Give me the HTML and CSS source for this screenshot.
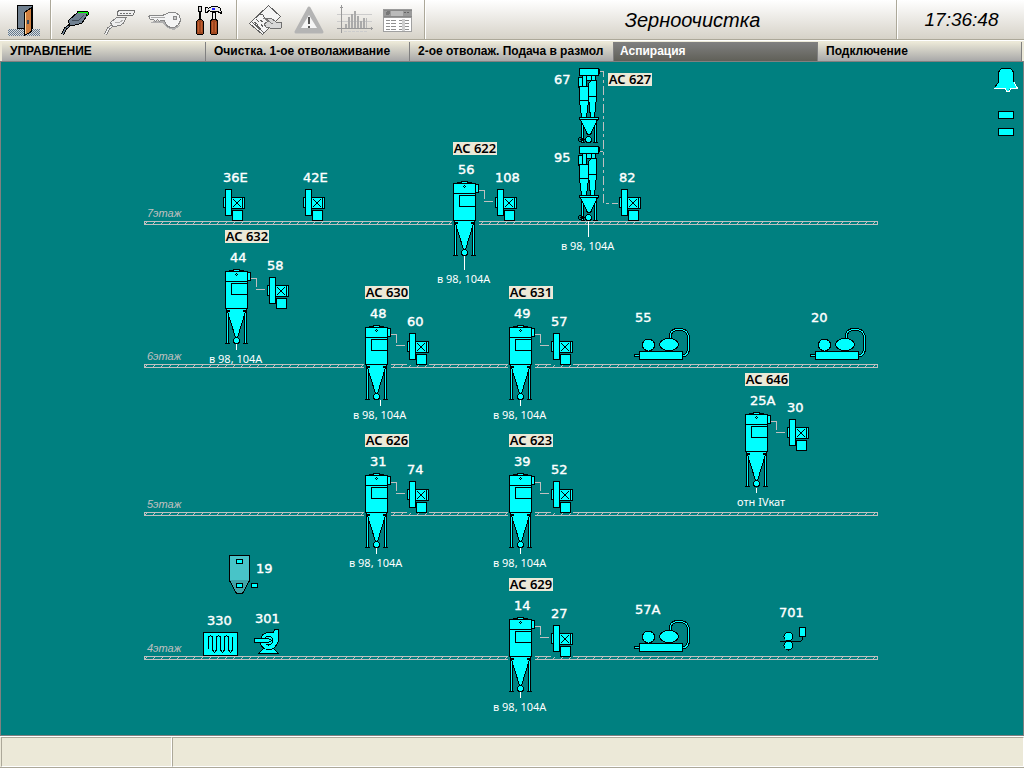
FILE: index.html
```html
<!DOCTYPE html>
<html lang="ru">
<head>
    <meta charset="UTF-8">
    <meta name="viewport" content="width=device-width, initial-scale=1.0">
    <title>Зерноочистка</title>
    <link rel="stylesheet" href="styles.css">
</head>
<body>
    <header class="toolbar">
        <div class="tool-group tool-group-exit">
            <button type="button" class="tool" aria-label="Выход">
                <svg width="50" height="38" viewBox="0 0 50 38">
                    <defs>
                        <pattern id="checker" width="2" height="2" patternUnits="userSpaceOnUse">
                            <rect width="2" height="2" fill="#d8dce0"/>
                            <rect width="1" height="1" fill="#63788a"/>
                            <rect x="1" y="1" width="1" height="1" fill="#63788a"/>
                        </pattern>
                    </defs>
                    <rect x="8" y="29" width="32" height="7" fill="url(#checker)"/>
                    <rect x="17.5" y="5.5" width="15" height="23" fill="#708090" stroke="#000"/>
                    <path d="M24.500 12.500L31.500 7.500V31.500L24.500 35.500Z" fill="#d08040" stroke="#000"/>
                    <path d="M25.500 13V34" stroke="#ffd8a0" fill="none"/>
                    <rect x="27" y="20" width="2" height="4" fill="#304860"/>
                </svg>
            </button>
        </div>
        <div class="tool-group">
            <button type="button" class="tool" aria-label="Подключить">
                <svg width="44" height="38" viewBox="0 0 44 38">
                    <path d="M15.500 25.500L11.500 28.500L8.500 34.500" stroke="#000" stroke-width="3" fill="none"/>
                    <path d="M15.500 25.500L11.500 28.500L8.500 34.500" stroke="#708090" fill="none"/>
                    <path d="M14.500 20.500L23.500 12.500H33.500L32.500 16.500L27.500 23.500L18.500 25.500H15.500Z" fill="#708090" stroke="#000"/>
                    <path d="M17.500 20.500H24.500L29.500 15.500" stroke="#404c58" fill="none"/>
                    <path d="M23 11.500H34M34.500 12V14.500L32.500 16.500" stroke="#000" fill="none"/>
                    <path d="M24 12.500H33.500V14.500" stroke="#00ff00" fill="none"/>
                </svg>
            </button>
            <button type="button" class="tool" aria-label="Отключить">
                <svg width="44" height="38" viewBox="0 0 44 38">
                    <path d="M14.500 25.500L10.500 28.500L7.500 34.500" stroke="#808080" stroke-width="3" fill="none"/>
                    <path d="M14.500 25.500L10.500 28.500L7.500 34.500" stroke="#f0f0f0" fill="none"/>
                    <path d="M12.500 22.500L18.500 17.500H28.500L24.500 24.500L17.500 26.500H14.500Z" fill="#eee" stroke="#808080"/>
                    <path d="M16.500 22.500H21.500L25.500 19.500" stroke="#b0b0b0" fill="none"/>
                    <path d="M20.500 10.500H36.500V12.500L34.500 15.500H19.500V12.500Z" fill="#f0f0f0" stroke="#707070"/>
                    <path d="M22 13.500H34" stroke="#707070" stroke-dasharray="2 1" fill="none"/>
                </svg>
            </button>
            <button type="button" class="tool" aria-label="Пароль">
                <svg width="44" height="38" viewBox="0 0 44 38">
                    <path d="M9 22L12 21H22L26 26L32 28L38 25L39 22L37 27L32 30L25 28L21 23H9Z" fill="#b0b0b0"/>
                    <path d="M6.500 16.500L8.500 15.500H20.500L22.500 14.500L27.500 12.500H33.500L37.500 15.500L38.500 20.500L36.500 24.500L32.500 27.500H28.500L24.500 25.500L22.500 20.500H18.500L17.500 21.500L15.500 19.500L13.500 21.500L11.500 19.500H8.500Z" fill="#f4f4f4" stroke="#888"/>
                    <path d="M9 17.500H23" stroke="#aaa" fill="none"/>
                    <circle cx="33" cy="18" r="2" fill="#ccc" stroke="#888"/>
                </svg>
            </button>
            <button type="button" class="tool" aria-label="Настройка">
                <svg width="44" height="38" viewBox="0 0 44 38">
                    <path d="M12.500 6.500H15.500V10.500L14.500 12.500V19.500H13.500V12.500L12.500 10.500Z" fill="#d0d0d0" stroke="#000"/>
                    <path d="M12.500 19.500H15.500L17.500 21.500V33.500L16.500 34.500H11.500L10.500 33.500V21.500Z" fill="#a04820" stroke="#000"/>
                    <path d="M12.500 22V32M15.500 22V32" stroke="#c06030" fill="none"/>
                    <rect x="26.500" y="12.500" width="3" height="8" fill="#eee" stroke="#000"/>
                    <path d="M19.500 7.500H21.500L22.500 8.500L25.500 6.500H31.500L34.500 8.500L35.500 13.500L31.500 11.500H25.500L22.500 10.500L21.500 12.500H19.500Z" fill="#e8e8e8" stroke="#000"/>
                    <rect x="26" y="8" width="3" height="2" fill="#2020ff"/>
                    <path d="M25.500 19.500H30.500L31.500 21.500V33.500L30.500 34.500H25.500L24.500 33.500V21.500Z" fill="#a04820" stroke="#000"/>
                    <path d="M26.500 22V32M29.500 22V32" stroke="#c06030" fill="none"/>
                </svg>
            </button>
        </div>
        <div class="tool-group tool-group-reports">
            <button type="button" class="tool" aria-label="Журнал">
                <svg width="44" height="38" viewBox="0 0 44 38">
                    <path d="M6.500 23.500L25.500 5.500L37.500 16.500L19.500 34.500Z" fill="#f4f4f4" stroke="#606060"/>
                    <path d="M16.500 14.500L19.500 14.500L22.500 19.500L30.500 24.500M8 21L21 33" stroke="#606060" fill="none"/>
                    <path d="M13 19L16 22M11 22L15 25M14 25L18 29M18 24L20 27M17 20L20 22" stroke="#606060" fill="none"/>
                    <path d="M38 22H33L28 18L22 18L26 21L21 24L23 27L31 29L38 28Z" fill="#d8d8d8" stroke="#707070"/>
                    <path d="M20 18L30 24" stroke="#808080" fill="none"/>
                </svg>
            </button>
            <button type="button" class="tool" aria-label="Аварии">
                <svg class="smooth" width="44" height="38" viewBox="0 0 44 38">
                    <path d="M22 8L35 32H9Z" fill="#b4b4b4" stroke="#b4b4b4" stroke-width="3" stroke-linejoin="round"/>
                    <path d="M22 15L30 28H14Z" fill="#f6f6f6"/>
                    <path d="M21 17H23V24H21ZM21 26H23V28H21Z" fill="#555"/>
                </svg>
            </button>
            <button type="button" class="tool" aria-label="Графики">
                <svg width="44" height="38" viewBox="0 0 44 38">
                    <path d="M6 14.500H41M6 21.500H41" stroke="#ccc" fill="none"/>
                    <path d="M6 28.500H42M10.500 5V33M9 7.500H12M40 27V30" stroke="#999" fill="none"/>
                    <path d="M14 24h2v4h-2zM17 17h2v11h-2zM20 14h2v14h-2zM23 11h2v17h-2zM26 16h2v12h-2zM29 21h2v7h-2zM32 18h2v10h-2z" fill="#aaa"/>
                    <path d="M35.500 18V28" stroke="#b8b8b8" fill="none"/>
                    <path d="M13 31.500H36" stroke="#ccc" stroke-dasharray="3 1" fill="none"/>
                </svg>
            </button>
            <button type="button" class="tool" aria-label="Отчёт">
                <svg width="44" height="38" viewBox="0 0 44 38">
                    <rect x="8.500" y="9.500" width="28" height="22" fill="#fff" stroke="#a0a0a0"/>
                    <rect x="8" y="9" width="29" height="9" fill="#9a9a9a"/>
                    <rect x="16" y="10" width="12" height="7" fill="#bababa"/>
                    <path d="M9 16.500H37M9 10.500H37" stroke="#888" fill="none"/>
                    <circle cx="13" cy="13" r="2" fill="#777"/>
                    <path d="M29 12.500H35" stroke="#666" stroke-dasharray="2 1" fill="none"/>
                    <path d="M11 20.500H35M11 23.500H35M11 26.500H35M11 29.500H35" stroke="#909090" stroke-dasharray="4 1 5 3" fill="none"/>
                    <rect x="27" y="19" width="3" height="12" fill="#d0d0d0"/>
                </svg>
            </button>
        </div>
        <h1 class="title">Зерноочистка</h1>
        <time class="clock">17:36:48</time>
    </header>

    <nav class="tabs">
        <a href="#control" class="tab">УПРАВЛЕНИЕ</a>
        <a href="#cleaning" class="tab">Очистка. 1-ое отволаживание</a>
        <a href="#feed" class="tab">2-ое отволаж. Подача в размол</a>
        <a href="#aspiration" class="tab active">Аспирация</a>
        <a href="#connection" class="tab">Подключение</a>
    </nav>

    <main class="mimic">
        <svg class="scheme" viewBox="0 0 1024 673">
            <defs>
                <pattern id="hatch" width="8" height="4" patternUnits="userSpaceOnUse">
                    <path d="M1 3L4 0" stroke="#c0c0c0" fill="none"/>
                </pattern>

                <!-- bag filter -->
                <symbol id="filter" width="42" height="76" overflow="visible">
                    <rect class="back" x="-1" y="36" width="27" height="40"/>
                    <path class="part" d="M4.500 2.500V1.500H8.500V0.500H14.500V1.500H18.500V2.500"/>
                    <rect class="part" x="0.500" y="2.500" width="22" height="37"/>
                    <path class="line" d="M0 12.500H23"/>
                    <rect class="part" x="22.500" y="3.500" width="3" height="8"/>
                    <path class="line" d="M11.500 4V5M10 5.500H11M12 5.500H13M11.500 6V7"/>
                    <rect class="part" x="6.500" y="14.500" width="16" height="11"/>
                    <rect class="part" x="1.500" y="39.500" width="2" height="35"/>
                    <rect class="part" x="19.500" y="39.500" width="2" height="35"/>
                    <path class="line" d="M0 74.500H5M18 74.500H23"/>
                    <path class="part" d="M1.500 39.500H21.500L12.500 68.500H10.500Z"/>
                    <path class="dark" d="M3 41h2v2h-2zM18 41h2v2h-2z"/>
                    <circle class="part" cx="11.500" cy="71.500" r="3"/>
                    <path class="pipe" d="M26 9.500H31.500V18M31 20.500H40"/>
                </symbol>

                <!-- fan with motor -->
                <symbol id="fan" width="22" height="32" overflow="visible">
                    <rect class="back" width="22" height="32"/>
                    <rect class="part" x="0.500" y="8.500" width="2" height="10"/>
                    <rect class="part" x="19.500" y="8.500" width="2" height="11"/>
                    <rect class="part" x="8.500" y="8.500" width="11" height="11"/>
                    <path class="line" d="M10 10L18 18M18 10L10 18"/>
                    <rect class="part" x="2.500" y="0.500" width="6" height="26"/>
                    <rect class="part" x="9.500" y="21.500" width="10" height="10"/>
                </symbol>

                <!-- twin cyclone -->
                <symbol id="cyclone" width="22" height="76" overflow="visible">
                    <rect class="part" x="0.500" y="9.500" width="4" height="10"/>
                    <path class="part" d="M4.500 7.500H8.500V18.500H4.500ZM8.500 7.500H13.500V12.500H8.500ZM13.500 7.500H17.500V14.500H13.500Z"/>
                    <rect class="part" x="1.500" y="0.500" width="19" height="7"/>
                    <rect class="part" x="20.500" y="1.500" width="1" height="4"/>
                    <path class="part" d="M1.500 18.500H10.500V32.500L8.500 49.500H3.500L1.500 32.500Z"/>
                    <path class="line" d="M1 32.500H10"/>
                    <path class="part" d="M10.500 15.500L13.500 12.500H18.500V28.500L16.500 49.500H12.500L10.500 28.500Z"/>
                    <path class="line" d="M10 28.500H19"/>
                    <rect class="part" x="3.500" y="51.500" width="2" height="23"/>
                    <rect class="part" x="16.500" y="51.500" width="2" height="23"/>
                    <path class="line" d="M3 74.500H7M15 74.500H20M2 71.500H10"/>
                    <rect class="part" x="1.500" y="49.500" width="19" height="2"/>
                    <path class="part" d="M2.500 51.500H19.500L12.500 66.500H9.500Z"/>
                    <circle class="part" cx="10.500" cy="71.500" r="3"/>
                    <circle class="line" cx="2.500" cy="71.500" r="2"/>
                </symbol>

                <!-- rotary blower -->
                <symbol id="blower" width="56" height="32" overflow="visible">
                    <path class="hose-edge" d="M36.500 11V8Q36.500 2 43 1.500H47Q54 2 54.500 10V19Q54.500 28 48 28"/>
                    <path class="hose" d="M36.500 11V8Q36.500 2 43 1.500H47Q54 2 54.500 10V19Q54.500 28 48 28"/>
                    <rect class="part" x="0.500" y="26.500" width="5" height="2"/>
                    <rect class="part" x="5.500" y="23.500" width="43" height="8"/>
                    <circle class="part" cx="14.500" cy="17" r="6"/>
                    <path class="line" d="M12 23.500H18M30 23.500H40"/>
                    <ellipse class="part" cx="35" cy="16.500" rx="9.500" ry="6"/>
                </symbol>
            </defs>

            <!-- floors -->
            <g class="floors">
                <g class="floor" transform="translate(144 159)"><rect width="733" height="3" x="0.500" y="0.500"/></g>
                <g class="floor" transform="translate(144 302)"><rect width="733" height="3" x="0.500" y="0.500"/></g>
                <g class="floor" transform="translate(144 450)"><rect width="733" height="3" x="0.500" y="0.500"/></g>
                <g class="floor" transform="translate(144 594)"><rect width="733" height="3" x="0.500" y="0.500"/></g>
            </g>
            <g class="floor-name">
                <text x="147" y="155">7этаж</text>
                <text x="147" y="298">6этаж</text>
                <text x="147" y="446">5этаж</text>
                <text x="147" y="590">4этаж</text>
            </g>

            <!-- air line of AC 627 -->
            <path class="air-line" d="M600 9.500H603.500V141.500H618M600 89.500H603"/>

            <use href="#cyclone" x="578" y="6"/>
            <use href="#cyclone" x="578" y="84"/>

            <use href="#filter" x="453" y="119"/>
            <use href="#filter" x="225" y="207"/>
            <use href="#filter" x="365" y="263"/>
            <use href="#filter" x="509" y="263"/>
            <use href="#filter" x="745" y="350"/>
            <use href="#filter" x="365" y="411"/>
            <use href="#filter" x="509" y="411"/>
            <use href="#filter" x="509" y="555"/>

            <use href="#fan" x="223" y="127"/>
            <use href="#fan" x="303" y="127"/>
            <use href="#fan" x="495" y="127"/>
            <use href="#fan" x="619" y="127"/>
            <use href="#fan" x="267" y="215"/>
            <use href="#fan" x="407" y="271"/>
            <use href="#fan" x="551" y="271"/>
            <use href="#fan" x="787" y="357"/>
            <use href="#fan" x="407" y="419"/>
            <use href="#fan" x="551" y="419"/>
            <use href="#fan" x="551" y="563"/>

            <use href="#blower" x="634" y="266"/>
            <use href="#blower" x="810" y="266"/>
            <use href="#blower" x="634" y="558"/>

            <!-- hopper 19 -->
            <g transform="translate(229 493)">
                <path fill="#48c4c8" d="M0 0H20V25H0Z"/>
                <path fill="#40a4a8" d="M0 25H20L14 38H7Z"/>
                <path class="line" d="M0.500 0.500H20.500V25.500L13.500 38.500H7.500L0.500 25.500Z"/>
                <path class="part" d="M7.500 4.500H13.500V8.500H7.500ZM7.500 28.500H13.500V32.500H7.500ZM22.500 28.500H28.500V32.500H22.500Z"/>
            </g>

            <!-- heater 330 -->
            <g transform="translate(203 570)">
                <rect class="part" x="0.500" y="0.500" width="34" height="23"/>
                <path class="line" d="M5.500 17V5L7.500 3.500L9.500 5V18L11.500 20.500L13.500 18V5L15.500 3.500L17.500 5V18L19.500 20.500L21.500 18V5L23.500 3.500L25.500 5V18L27.500 20.500L29.500 18V5"/>
            </g>

            <!-- fan 301 -->
            <g transform="translate(254 567)">
                <path class="part" d="M6.500 22.500L9.500 19.500H19.500L22.500 22.500L24.500 24.500H4.500Z"/>
                <path class="part" d="M20.500 0.500H24.500V12.500L22 16.500Q20 20.500 15 20.500Q6.500 20.500 6.500 12Q7 4 14 3.500H19.500Z"/>
                <circle class="part" cx="14.500" cy="11.500" r="4.500"/>
                <path class="part" d="M0.500 9.500H14.500L17.500 11.500L14.500 13.500H0.500Z"/>
            </g>

            <!-- rolls 701 -->
            <g transform="translate(780 565)">
                <circle class="part" cx="8.500" cy="9.500" r="4.500"/>
                <circle class="part" cx="8.500" cy="18.500" r="4.500"/>
                <path class="line" d="M0 14.500H20.500L22.500 12.500V9"/>
                <rect class="part" x="19.500" y="0.500" width="6" height="9"/>
            </g>

            <!-- outlets -->
            <path class="outlet" d="M464.500 194V208M588.500 159V175M236.500 282V288M380.500 338V344M520.500 338V344M756.500 426V431M376.500 486V492M520.500 486V492M520.500 630V636"/>

            <g class="tag-box">
                <rect x="453" y="80" width="44" height="13"/>
                <rect x="608" y="11" width="44" height="13"/>
                <rect x="225" y="168" width="44" height="13"/>
                <rect x="365" y="224" width="44" height="13"/>
                <rect x="509" y="224" width="44" height="13"/>
                <rect x="745" y="311" width="44" height="13"/>
                <rect x="365" y="372" width="44" height="13"/>
                <rect x="509" y="372" width="44" height="13"/>
                <rect x="509" y="516" width="44" height="13"/>
            </g>
            <g class="tag">
                <text x="475" y="91">АС 622</text>
                <text x="630" y="22">АС 627</text>
                <text x="247" y="179">АС 632</text>
                <text x="387" y="235">АС 630</text>
                <text x="531" y="235">АС 631</text>
                <text x="767" y="322">АС 646</text>
                <text x="387" y="383">АС 626</text>
                <text x="531" y="383">АС 623</text>
                <text x="531" y="527">АС 629</text>
            </g>

            <g class="number">
                <text x="223" y="120">36Е</text>
                <text x="303" y="120">42Е</text>
                <text x="458" y="112">56</text>
                <text x="495" y="120">108</text>
                <text x="554" y="22">67</text>
                <text x="554" y="100">95</text>
                <text x="619" y="120">82</text>
                <text x="230" y="200">44</text>
                <text x="267" y="208">58</text>
                <text x="370" y="256">48</text>
                <text x="407" y="264">60</text>
                <text x="514" y="256">49</text>
                <text x="551" y="264">57</text>
                <text x="635" y="260">55</text>
                <text x="811" y="260">20</text>
                <text x="750" y="343">25А</text>
                <text x="787" y="350">30</text>
                <text x="370" y="404">31</text>
                <text x="407" y="412">74</text>
                <text x="514" y="404">39</text>
                <text x="551" y="412">52</text>
                <text x="514" y="548">14</text>
                <text x="551" y="556">27</text>
                <text x="635" y="552">57А</text>
                <text x="779" y="555">701</text>
                <text x="256" y="511">19</text>
                <text x="207" y="563">330</text>
                <text x="255" y="561">301</text>
            </g>

            <g class="target">
                <text x="437" y="221">в 98, 104А</text>
                <text x="561" y="188">в 98, 104А</text>
                <text x="209" y="301">в 98, 104А</text>
                <text x="353" y="357">в 98, 104А</text>
                <text x="493" y="357">в 98, 104А</text>
                <text x="737" y="444">отн IVкат</text>
                <text x="349" y="505">в 98, 104А</text>
                <text x="493" y="505">в 98, 104А</text>
                <text x="493" y="649">в 98, 104А</text>
            </g>
        </svg>

        <div class="alarm-panel">
            <button type="button" class="alarm" aria-label="Звонок">
                <svg width="24" height="25" viewBox="0 0 24 25">
                    <path d="M7.500 0.500H16.500L19.500 4V14L23 19.500H16L14.500 23H12.500L11 19.500H1L4.500 14V4Z" fill="#0ff"/>
                    <path d="M0.500 19.500L4.500 14V4L7.500 0.500H16.500L19.500 4V14" fill="none" stroke="#000"/>
                    <path d="M0 20.500H11.500L12.500 23.500H15.500L16.500 20.500H23.500L20 14" fill="none" stroke="#fff"/>
                </svg>
            </button>
            <span class="lamp"></span>
            <span class="lamp"></span>
        </div>
    </main>

    <footer class="statusbar">
        <div class="status-cell"></div>
        <div class="status-cell"></div>
    </footer>
</body>
</html>
```
FILE: styles.css
```css
* {
    margin: 0;
    padding: 0;
    box-sizing: border-box;
}

body {
    min-height: 100vh;
    display: flex;
    flex-direction: column;
    background-color: #ece9d8;
    font-family: "Liberation Sans", Arial, sans-serif;
}

svg {
    display: block;
    shape-rendering: crispEdges;
}

svg.smooth {
    shape-rendering: auto;
}

/* toolbar */
.toolbar {
    display: flex;
    height: 40px;
    background: linear-gradient(#ffffff, #d6d2c8);
    border-bottom: 1px solid #aca899;
}

.tool-group {
    display: flex;
    align-items: flex-start;
    padding: 0 6px 0 3px;
    border-right: 1px solid #aca899;
    box-shadow: 1px 0 0 #ffffff;
}

.tool-group-exit {
    padding: 0;
}

.tool-group-reports {
    padding: 0 5px 0 6px;
}

.tool {
    background: none;
    border: none;
    cursor: pointer;
}

.title {
    flex: 1;
    padding-left: 64px;
    border-right: 1px solid #aca899;
    box-shadow: 1px 0 0 #ffffff;
    color: #000000;
    font-size: 20px;
    font-style: italic;
    font-weight: normal;
    line-height: 40px;
    text-align: center;
}

.clock {
    width: 127px;
    padding-left: 2px;
    font-size: 19px;
    font-style: italic;
    line-height: 40px;
    text-align: center;
}

/* tabs */
.tabs {
    display: grid;
    grid-template-columns: repeat(5, minmax(0, 1fr));
    height: 22px;
    padding: 1px 2px 0;
    background-color: #ece9d8;
    border-top: 1px solid #ffffff;
    border-bottom: 1px solid #808080;
}

.tab {
    padding-left: 8px;
    background: linear-gradient(#ece9d8, #a8a8a8);
    border-right: 1px solid #808080;
    color: #000000;
    font-size: 12px;
    font-weight: bold;
    line-height: 18px;
    text-decoration: none;
    white-space: nowrap;
}

.tab.active {
    padding-left: 6px;
    background: linear-gradient(#808080, #606058);
    color: #ffffff;
}

/* mimic */
.mimic {
    flex: 1;
    position: relative;
    background-color: #008080;
    box-shadow: inset 1px 0 0 #808080, inset -1px -1px 0 #808080;
}

.scheme {
    width: 100%;
}

.part {
    fill: #00ffff;
    stroke: #000000;
}

.line {
    fill: none;
    stroke: #000000;
}

.dark {
    fill: #000000;
}

.back {
    fill: #008080;
}

.pipe {
    fill: none;
    stroke: #c0c0c0;
}

.hose-edge {
    fill: none;
    stroke: #000000;
    stroke-width: 3;
}

.hose {
    fill: none;
    stroke: #00ffff;
}

.air-line {
    fill: none;
    stroke: #c0c0c0;
    stroke-dasharray: 9 3 3 3;
}

.outlet {
    stroke: #ffffff;
}

.floor rect {
    fill: url(#hatch);
    stroke: #c0c0c0;
}

.floor-name {
    fill: #c0c0c0;
    font-size: 11px;
    font-style: italic;
}

.tag-box {
    fill: #ece9d8;
}

.tag {
    fill: #000000;
    font-family: "Noto Sans", Tahoma, sans-serif;
    font-size: 13px;
    font-weight: 600;
    text-anchor: middle;
}

.number {
    fill: #ffffff;
    stroke: #ffffff;
    stroke-width: 0.4;
    font-family: "DejaVu Sans", Verdana, sans-serif;
    font-size: 13px;
}

.target {
    fill: #ffffff;
    font-family: "Noto Sans", Tahoma, sans-serif;
    font-size: 11px;
}

/* alarm lamps over the mimic */
.alarm-panel {
    position: absolute;
    top: 6px;
    right: 6px;
    display: flex;
    flex-direction: column;
    align-items: center;
    gap: 9px;
}

.alarm {
    margin-bottom: 9px;
    background: none;
    border: none;
    cursor: pointer;
}

.lamp {
    width: 16px;
    height: 8px;
    background-color: #00ffff;
    border: 1px solid #000000;
}

/* status bar */
.statusbar {
    display: grid;
    grid-template-columns: 1fr 5fr;
    height: 32px;
    padding-left: 1px;
    border-top: 1px solid #ffffff;
    border-bottom: 1px solid #aca899;
}

.status-cell {
    border: 1px solid #ffffff;
    border-top-color: #aca899;
    border-left-color: #aca899;
}
```
